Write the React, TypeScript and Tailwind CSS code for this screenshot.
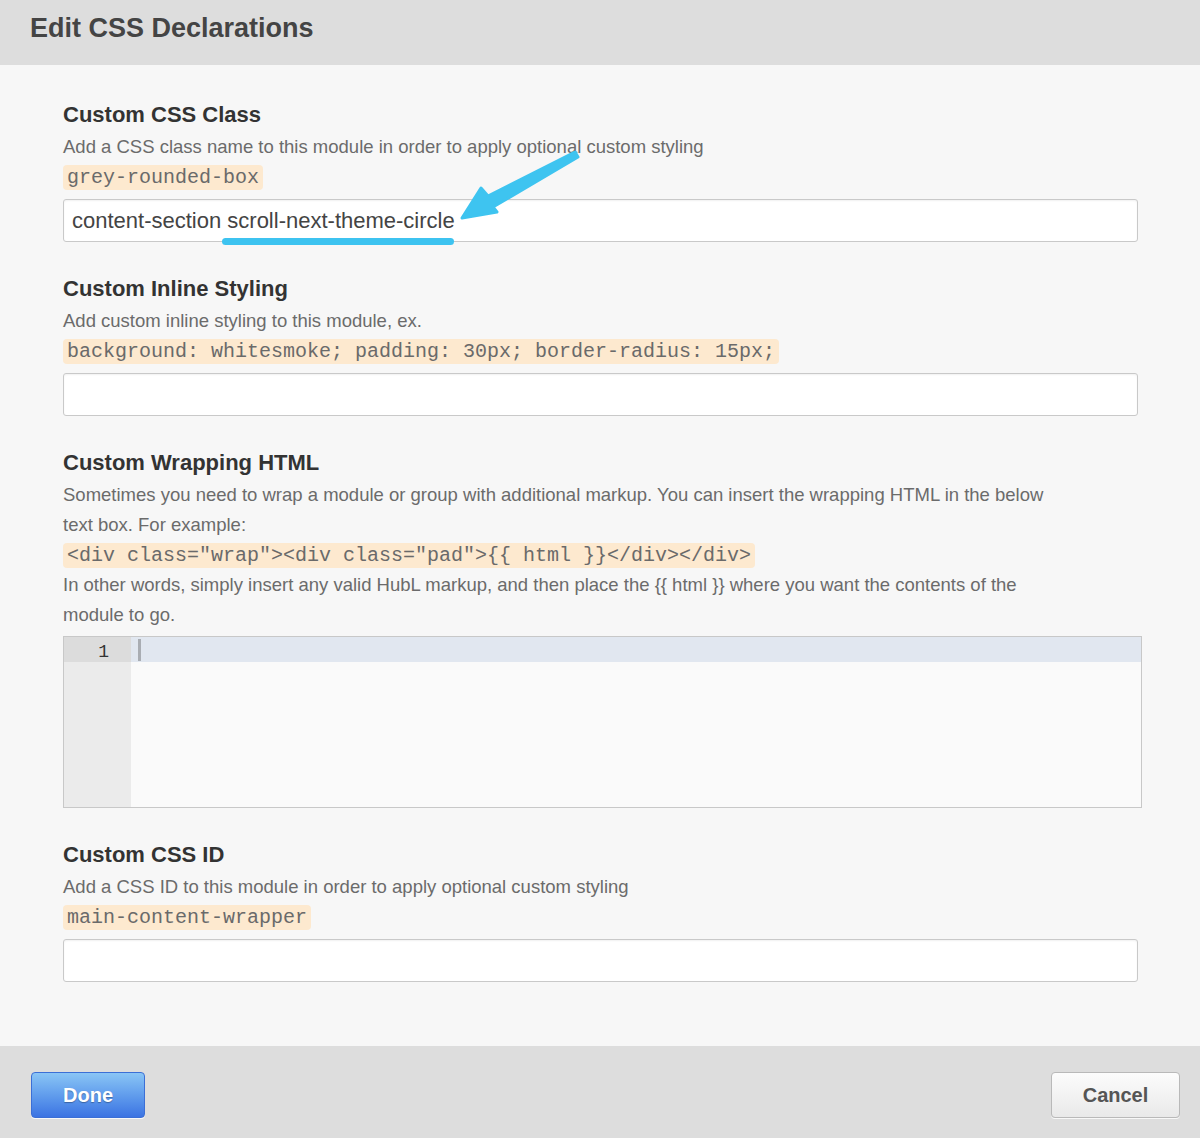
const sans = { fontFamily: '"Liberation Sans", Arial, sans-serif' };

function Chip({ children }: { children: React.ReactNode }) {
  return (
    <div className="mt-[3px] flex">
      <span className="inline-block h-[25px] rounded-[4px] bg-[#fde9cf] px-[4px] font-['Liberation_Mono',monospace] text-[20px] leading-[25px] whitespace-pre text-[#6a6a6a]">
        {children}
      </span>
    </div>
  );
}

function Field({ value, children }: { value?: string; children?: React.ReactNode }) {
  return (
    <div className="relative mt-[9px] h-[43px] w-[1075px] rounded-[3px] border border-[#c9c9c9] bg-white px-[8px] text-[22px] leading-[41px] text-[#444] shadow-[inset_0_1px_2px_rgba(0,0,0,0.06)]">
      {value}
      {children}
    </div>
  );
}

export default function App() {
  return (
    <div className="relative flex min-h-[1138px] w-full flex-col bg-[#f7f7f7]" style={sans}>
      <div className="flex h-[65px] items-center bg-[#dddddd] px-[30px] pb-[8px]">
        <h1 className="text-[27px] font-bold text-[#444]">Edit CSS Declarations</h1>
      </div>

      <div className="flex-1 px-[63px] pt-[33px]">
        <h2 className="text-[22px] leading-[34px] font-bold text-[#333]">Custom CSS Class</h2>
        <p className="text-[18.5px] leading-[30px] text-[#6b6b6b]">
          Add a CSS class name to this module in order to apply optional custom styling
        </p>
        <Chip>grey-rounded-box</Chip>
        <Field value="content-section scroll-next-theme-circle">
          <div className="absolute top-[38px] left-[158px] h-[7px] w-[232px] rounded-full bg-[#3dc3f0]" />
        </Field>

        <h2 className="mt-[30px] text-[22px] leading-[34px] font-bold text-[#333]">Custom Inline Styling</h2>
        <p className="text-[18.5px] leading-[30px] text-[#6b6b6b]">Add custom inline styling to this module, ex.</p>
        <Chip>background: whitesmoke; padding: 30px; border-radius: 15px;</Chip>
        <Field />

        <h2 className="mt-[30px] text-[22px] leading-[34px] font-bold text-[#333]">Custom Wrapping HTML</h2>
        <p className="text-[18.5px] leading-[30px] text-[#6b6b6b]">
          Sometimes you need to wrap a module or group with additional markup. You can insert the wrapping HTML in the below
          <br />
          text box. For example:
        </p>
        <Chip>{'<div class="wrap"><div class="pad">{{ html }}</div></div>'}</Chip>
        <p className="mt-[2px] text-[18.5px] leading-[30px] text-[#6b6b6b]">
          In other words, simply insert any valid HubL markup, and then place the {'{{ html }}'} where you want the contents of the
          <br />
          module to go.
        </p>
        <div className="mt-[6px] flex h-[172px] w-[1079px] border border-[#c8c8c8] bg-[#fafafa]">
          <div className="w-[67px] bg-[#ebebeb]">
            <div className="h-[25px] bg-[#dcdcdc] pt-[2px] pr-[22px] text-right font-['Liberation_Mono',monospace] text-[18px] leading-[26px] text-[#333]">
              1
            </div>
          </div>
          <div className="flex-1">
            <div className="flex h-[25px] items-center bg-[#e1e7f0] pl-[7px]">
              <div className="h-[22px] w-[3px] bg-[#a9adb3]" />
            </div>
          </div>
        </div>

        <h2 className="mt-[30px] text-[22px] leading-[34px] font-bold text-[#333]">Custom CSS ID</h2>
        <p className="text-[18.5px] leading-[30px] text-[#6b6b6b]">
          Add a CSS ID to this module in order to apply optional custom styling
        </p>
        <Chip>main-content-wrapper</Chip>
        <Field />
      </div>

      <div className="mt-[64px] flex h-[92px] items-center justify-between bg-[#dddddd] pt-[6px] pr-[20px] pl-[31px]">
        <button className="h-[46px] w-[114px] rounded-[4px] border border-[#3b6fd6] bg-gradient-to-b from-[#8ac5f5] to-[#3c73e2] text-[20px] font-bold text-white shadow-[0_1px_0_rgba(255,255,255,0.8)] [text-shadow:0_1px_1px_rgba(0,0,0,0.3)]">
          Done
        </button>
        <button className="h-[46px] w-[129px] rounded-[4px] border border-[#b9b9b9] bg-gradient-to-b from-[#fcfcfc] to-[#e9e9e9] text-[20px] font-bold text-[#555] shadow-[0_1px_0_rgba(255,255,255,0.8)]">
          Cancel
        </button>
      </div>

      <svg className="pointer-events-none absolute top-0 left-0" width="1200" height="300" viewBox="0 0 1200 300">
        <path
          d="M575 152 L578 157 L493 207 L497 212 L462 218 L481 188 L488 196 Z"
          fill="#3ec4f0"
          stroke="#3ec4f0"
          strokeWidth="3"
          strokeLinejoin="round"
        />
      </svg>
    </div>
  );
}
